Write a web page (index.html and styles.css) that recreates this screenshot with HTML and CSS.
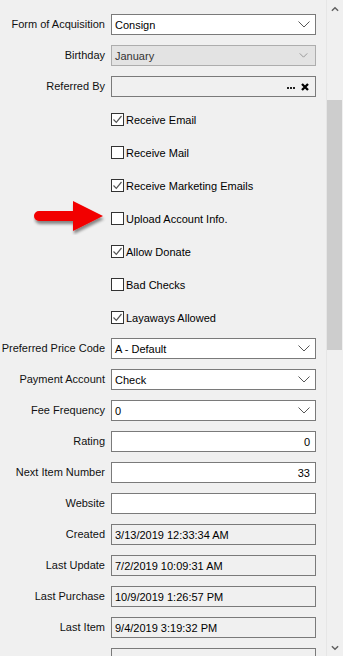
FILE: index.html
```html
<!DOCTYPE html>
<html>
<head>
<meta charset="utf-8">
<link rel="stylesheet" href="styles.css">
</head>
<body>
<div class="window">
  <div class="form">
    <div class="row"><label class="lbl">Form of Acquisition</label><div class="field combo"><span class="val">Consign</span><svg class="chev" viewBox="0 0 12 7"><path d="M0.5 0.5 L6 6 L11.5 0.5" fill="none" stroke="#444" stroke-width="0.9"/></svg></div></div>
    <div class="row"><label class="lbl">Birthday</label><div class="field combo disabled"><span class="val">January</span><svg class="chev small" viewBox="0 0 10 6"><path d="M0.5 0.5 L5 5 L9.5 0.5" fill="none" stroke="#8a8a8a" stroke-width="1"/></svg></div></div>
    <div class="row"><label class="lbl">Referred By</label><div class="field ro lookup"><span class="val"></span><span class="dots"><i></i><i></i><i></i></span><svg class="xbtn" viewBox="0 0 8 8"><path d="M1 1 L7 7 M7 1 L1 7" stroke="#000" stroke-width="2.3"/></svg></div></div>

    <div class="row chk"><span></span><div class="cb"><span class="box checked"><svg viewBox="0 0 11 11"><path d="M1.5 5.5 L4.3 8.3 L9.5 2" fill="none" stroke="#555" stroke-width="1.2"/></svg></span>Receive Email</div></div>
    <div class="row chk"><span></span><div class="cb"><span class="box"></span>Receive Mail</div></div>
    <div class="row chk"><span></span><div class="cb"><span class="box checked"><svg viewBox="0 0 11 11"><path d="M1.5 5.5 L4.3 8.3 L9.5 2" fill="none" stroke="#555" stroke-width="1.2"/></svg></span>Receive Marketing Emails</div></div>
    <div class="row chk"><span></span><div class="cb"><span class="box"></span>Upload Account Info.</div></div>
    <div class="row chk"><span></span><div class="cb"><span class="box checked"><svg viewBox="0 0 11 11"><path d="M1.5 5.5 L4.3 8.3 L9.5 2" fill="none" stroke="#555" stroke-width="1.2"/></svg></span>Allow Donate</div></div>
    <div class="row chk"><span></span><div class="cb"><span class="box"></span>Bad Checks</div></div>
    <div class="row chk last"><span></span><div class="cb"><span class="box checked"><svg viewBox="0 0 11 11"><path d="M1.5 5.5 L4.3 8.3 L9.5 2" fill="none" stroke="#555" stroke-width="1.2"/></svg></span>Layaways Allowed</div></div>

    <div class="row"><label class="lbl">Preferred Price Code</label><div class="field combo"><span class="val">A - Default</span><svg class="chev" viewBox="0 0 12 7"><path d="M0.5 0.5 L6 6 L11.5 0.5" fill="none" stroke="#444" stroke-width="0.9"/></svg></div></div>
    <div class="row"><label class="lbl">Payment Account</label><div class="field combo"><span class="val">Check</span><svg class="chev" viewBox="0 0 12 7"><path d="M0.5 0.5 L6 6 L11.5 0.5" fill="none" stroke="#444" stroke-width="0.9"/></svg></div></div>
    <div class="row"><label class="lbl">Fee Frequency</label><div class="field combo"><span class="val">0</span><svg class="chev" viewBox="0 0 12 7"><path d="M0.5 0.5 L6 6 L11.5 0.5" fill="none" stroke="#444" stroke-width="0.9"/></svg></div></div>
    <div class="row"><label class="lbl">Rating</label><div class="field num"><span class="val">0</span></div></div>
    <div class="row"><label class="lbl">Next Item Number</label><div class="field num"><span class="val">33</span></div></div>
    <div class="row"><label class="lbl">Website</label><div class="field"><span class="val"></span></div></div>
    <div class="row"><label class="lbl">Created</label><div class="field ro"><span class="val">3/13/2019 12:33:34 AM</span></div></div>
    <div class="row"><label class="lbl">Last Update</label><div class="field ro"><span class="val">7/2/2019 10:09:31 AM</span></div></div>
    <div class="row"><label class="lbl">Last Purchase</label><div class="field ro"><span class="val">10/9/2019 1:26:57 PM</span></div></div>
    <div class="row"><label class="lbl">Last Item</label><div class="field ro"><span class="val">9/4/2019 3:19:32 PM</span></div></div>
    <div class="row"><label class="lbl"></label><div class="field ro"><span class="val"></span></div></div>
  </div>
  <div class="scrollbar">
    <div class="sb-btn"><svg viewBox="0 0 9 6"><path d="M1 5 L4.5 1.5 L8 5" fill="none" stroke="#606060" stroke-width="1.6"/></svg></div>
    <div class="sb-track"><div class="sb-thumb"></div></div>
    <div class="sb-btn"><svg viewBox="0 0 9 6"><path d="M1 1 L4.5 4.5 L8 1" fill="none" stroke="#606060" stroke-width="1.6"/></svg></div>
  </div>
  <svg class="arrow" viewBox="0 0 76 36">
    <defs>
      <filter id="sh" x="-20%" y="-30%" width="140%" height="170%">
        <feGaussianBlur in="SourceAlpha" stdDeviation="1.6"/>
        <feOffset dx="1" dy="3" result="b"/>
        <feComponentTransfer><feFuncA type="linear" slope="0.45"/></feComponentTransfer>
        <feMerge><feMergeNode/><feMergeNode in="SourceGraphic"/></feMerge>
      </filter>
    </defs>
    <g filter="url(#sh)">
      <path d="M6 12 L40 12 L40 2 L70 17 L40 32 L40 22 L6 22 A5 5 0 0 1 6 12 Z" fill="#f20000"/>
    </g>
  </svg>
</div>
</body>
</html>
```
FILE: styles.css
```css
* { box-sizing: border-box; }
html, body { margin: 0; padding: 0; }
body {
  background: #f0f0f0;
  font-family: "Liberation Sans", Arial, sans-serif;
  font-size: 11px;
  color: #000;
  width: 343px;
  height: 656px;
  overflow: hidden;
}
.window {
  position: relative;
  display: flex;
  width: 343px;
  height: 656px;
  overflow: hidden;
}
.form {
  width: 326px;
  padding-top: 14px;
  display: flex;
  flex-direction: column;
  gap: 10px;
}
.row {
  display: grid;
  grid-template-columns: 105px 205px;
  column-gap: 6px;
  height: 21px;
  align-items: center;
  flex: none;
}
.lbl {
  text-align: right;
  white-space: nowrap;
  line-height: 21px;
  color: #111;
}
.field {
  height: 21px;
  border: 1px solid #7a7a7a;
  background: #fff;
  display: flex;
  align-items: center;
  padding: 0 4px 0 3px;
  white-space: nowrap;
}
.field .val { flex: 1; }
.field.disabled {
  background: #e3e3e3;
  border-color: #adadad;
  color: #333;
}
.field.ro { background: #f0f0f0; }
.field.num .val { text-align: right; padding-right: 1px; }
.chev { width: 12px; height: 7px; margin-right: 1px; }
.chev.small { width: 9px; height: 5px; margin-right: 3px; }
.lookup .dots { display: flex; gap: 1px; margin-right: 6px; margin-top: 3px; }
.lookup .dots i { width: 2px; height: 2px; background: #222; display: block; }
.xbtn { width: 8px; height: 8px; margin-right: 2px; }
.chk { margin-top: 2px; }
.cb { display: flex; align-items: center; }
.box {
  width: 13px;
  height: 13px;
  border: 1px solid #333;
  background: #fff;
  margin-right: 2px;
  display: flex;
  flex: none;
}
.box svg { width: 11px; height: 11px; }
.scrollbar {
  width: 17px;
  height: 656px;
  background: #f0f0f0;
  border-left: 1px solid #e6e6e6;
  display: flex;
  flex-direction: column;
}
.sb-btn {
  height: 17px;
  display: flex;
  align-items: center;
  justify-content: center;
  flex: none;
}
.sb-btn svg { width: 8px; height: 6px; }
.sb-track { flex: 1; padding-top: 83px; }
.sb-thumb {
  width: 15px;
  height: 250px;
  background: #cdcdcd;
}
.arrow {
  position: absolute;
  left: 33px;
  top: 199px;
  width: 76px;
  height: 36px;
}
```
